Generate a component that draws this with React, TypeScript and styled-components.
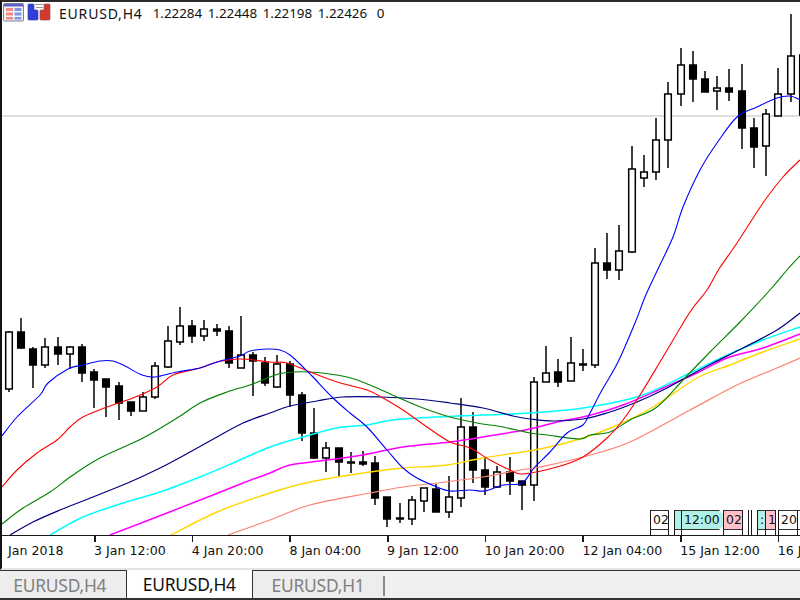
import styled, { createGlobalStyle } from 'styled-components';

const GlobalStyle = createGlobalStyle`
  html, body {
    margin: 0;
    width: 800px;
    height: 600px;
    overflow: hidden;
    background: #fff;
  }
`;

const Page = styled.div`
  display: flex;
  flex-direction: column;
  width: 800px;
  height: 600px;
`;

const ChartWindow = styled.div`
  display: flex;
  flex-direction: column;
  height: 570px;
  box-sizing: border-box;
  border-left: 2px solid #141414;
  border-top: 2px solid #2a2a2a;
  border-bottom: 2px solid #e4e4e4;
  background: #fff;
`;

const Plot = styled.div`
  position: relative;
  height: 533px;
  overflow: hidden;
`;

const PlotSvg = styled.svg`
  display: block;
  width: 798px;
  height: 533px;
  filter: blur(0.3px);
`;

const Legend = styled.div`
  position: absolute;
  top: 1px;
  left: 1px;
  display: flex;
  align-items: center;
  height: 20px;
  font: 13.4px 'Noto Sans', sans-serif;
  color: #111;
  white-space: nowrap;
`;

const LegendIcons = styled.svg`
  flex: 0 0 49px;
  height: 20px;
  margin-right: 7px;
`;

const LegendName = styled.span`
  margin-right: 10px;
  font-size: 14px;
  letter-spacing: 0.8px;
`;

const LegendValue = styled.span`
  flex: 0 0 55px;
`;

const LegendCount = styled.span`
  margin-left: 4px;
`;

const Axis = styled.div`
  position: relative;
  display: flex;
  flex: 1;
  border-top: 1.5px solid #1a1a1a;
  overflow: hidden;
`;

const AxisLabel = styled.div<{ $first?: boolean }>`
  position: relative;
  flex: 0 0 ${(p) => (p.$first ? '92px' : '97.7px')};
  box-sizing: border-box;
  padding: 7px 0 0 ${(p) => (p.$first ? '6px' : '0')};
  font: 12.6px 'DejaVu Sans', sans-serif;
  color: #111;
  white-space: nowrap;

  &::before {
    content: '';
    display: ${(p) => (p.$first ? 'none' : 'block')};
    position: absolute;
    top: 0;
    left: 0;
    width: 1.5px;
    height: 6px;
    background: #1a1a1a;
  }
`;

const MarkerStrip = styled.div`
  position: absolute;
  left: 648px;
  bottom: 0;
  display: flex;
  height: 25px;
`;

const tones = { plain: '#fff', cyan: '#b0f0e6', pink: '#ffc0cb' };

const Marker = styled.div<{ $w: number }>`
  flex: 0 0 ${(p) => p.$w}px;
  box-sizing: border-box;
  height: 25px;
  border-left: 1.5px solid #1a1a1a;
  overflow: hidden;
`;

const MarkerFace = styled.div<{ $tone: keyof typeof tones; $notched?: boolean }>`
  height: 20px;
  box-sizing: border-box;
  padding: 1px 0 0 2px;
  background: ${(p) => tones[p.$tone]};
  border-top: 1.5px solid #333;
  border-bottom: 1.5px solid #333;
  font: 12.4px 'DejaVu Sans', sans-serif;
  color: #111;
  white-space: nowrap;
  clip-path: ${(p) =>
    p.$notched
      ? 'polygon(0 0, calc(100% - 4px) 0, 100% 4px, 100% calc(100% - 4px), calc(100% - 4px) 100%, 0 100%)'
      : 'none'};
`;

const TabBar = styled.div`
  display: flex;
  flex: 1;
  box-sizing: border-box;
  background: #f0f0f0;
  border-bottom: 2px solid #333;
`;

const Tab = styled.div<{ $active?: boolean }>`
  flex: 0 0 126.5px;
  box-sizing: border-box;
  padding: 2px ${(p) => (p.$active ? '0' : '6px')} 0 0;
  text-align: center;
  font: 17.4px 'Noto Sans', sans-serif;
  letter-spacing: -0.2px;
  color: ${(p) => (p.$active ? '#101010' : '#808080')};
  background: ${(p) => (p.$active ? '#fff' : '#ededed')};
  border-top: ${(p) => (p.$active ? '0' : '1.5px solid #333')};
  border-right: 1.5px solid #333;
`;

const LastTab = styled(Tab)`
  flex: 0 0 130px;
  padding: 2px 0 0 0;
  border-right: 0;
`;

const TabRest = styled.div`
  flex: 1;
  border-top: 1.5px solid #333;
  background: #f0f0f0;
`;

const TabDivider = styled.div`
  flex: 0 0 2px;
  width: 2px;
  height: 20px;
  margin-top: 5px;
  background: #8a8a8a;
`;

const TabDividerWrap = styled.div`
  border-top: 1.5px solid #333;
  background: #ededed;
`;

type Candle = [x: number, top: number, bottom: number, wickTop: number, wickBottom: number, bull: boolean];

const candles: Candle[] = [
  [9, 332, 389, 331, 392, true], [21, 332, 348, 318, 349, false], [33, 349, 365, 347, 388, false],
  [45, 347, 365, 338, 368, true], [58, 347, 354, 337, 365, false], [70, 347, 354, 346, 369, true],
  [82, 347, 373, 344, 382, false], [94, 372, 380, 369, 408, false], [106, 379, 387, 379, 417, false],
  [119, 386, 403, 382, 420, false], [131, 402, 411, 402, 416, false], [143, 397, 411, 392, 411, true],
  [155, 366, 397, 362, 399, true], [168, 341, 367, 326, 368, true], [180, 326, 342, 307, 345, true],
  [192, 326, 336, 320, 343, false], [204, 329, 336, 320, 341, true], [217, 329, 331, 324, 336, false],
  [229, 331, 363, 326, 368, false], [241, 355, 368, 316, 368, true], [253, 355, 361, 352, 396, false],
  [265, 363, 383, 357, 386, false], [277, 364, 387, 355, 388, true], [290, 364, 395, 361, 407, false],
  [302, 395, 433, 392, 441, false], [314, 433, 458, 408, 459, false], [326, 448, 458, 442, 472, true],
  [339, 448, 462, 448, 477, false], [351, 462, 463, 452, 473, false], [363, 462, 464, 451, 466, false],
  [375, 463, 498, 456, 505, false], [387, 497, 519, 497, 527, false], [400, 518, 519, 503, 523, false],
  [412, 500, 519, 496, 525, true], [424, 488, 501, 488, 512, true], [436, 489, 512, 484, 512, false],
  [449, 497, 512, 476, 518, true], [461, 427, 498, 398, 507, true], [473, 427, 470, 412, 483, false],
  [485, 470, 487, 457, 495, false], [497, 472, 487, 466, 488, true], [510, 472, 481, 457, 495, false],
  [522, 481, 485, 481, 510, false], [534, 382, 485, 377, 501, true], [546, 373, 382, 346, 382, true],
  [558, 372, 382, 359, 387, false], [571, 363, 381, 337, 381, true], [583, 364, 365, 349, 371, false],
  [595, 263, 365, 248, 368, true], [607, 263, 270, 233, 279, false], [619, 251, 270, 225, 280, true],
  [632, 169, 252, 146, 253, true], [644, 172, 178, 155, 187, true], [656, 140, 172, 118, 180, true],
  [668, 94, 140, 82, 168, true], [681, 65, 94, 48, 106, true], [693, 65, 79, 51, 102, false],
  [705, 79, 92, 71, 92, false], [717, 88, 91, 76, 110, true], [729, 88, 92, 69, 101, false],
  [742, 91, 128, 64, 149, false], [754, 128, 147, 118, 168, false], [766, 114, 146, 109, 176, true],
  [778, 94, 116, 68, 116, true], [791, 56, 94, 14, 102, true], [803, 55, 115, 40, 120, true],
];

const averages: { color: string; width: number; points: string }[] = [
  {
    color: '#fa8072',
    width: 1.2,
    points:
      '228,535 270,520 310,505 370,493 403,487 437,483 483,477 520,470 540,467 583,457 630,442 690,410 737,385 777,368 800,358',
  },
  {
    color: '#ffd700',
    width: 1.4,
    points:
      '171,535 217,512 270,493 310,482 370,472 403,468 447,465 483,458 540,449 580,439 613,427 653,407 697,378 730,365 763,352 800,339',
  },
  {
    color: '#ff00ff',
    width: 1.5,
    points:
      '110,535 167,513 213,495 243,483 270,473 290,465 327,460 363,455 403,447 450,442 483,437 530,429 557,422 587,416 623,405 663,388 697,373 727,358 763,348 800,334',
  },
  {
    color: '#00ffff',
    width: 1.5,
    points:
      '50,535 83,517 123,503 160,492 200,477 233,463 270,447 303,437 337,428 367,425 393,420 437,417 483,415 530,413 583,408 640,396 690,373 723,357 763,340 800,327',
  },
  {
    color: '#000080',
    width: 1.2,
    points:
      '10,535 33,522 60,510 93,497 130,482 160,468 190,452 217,437 243,423 270,413 290,406 317,401 343,397 380,397 417,399 450,403 483,408 513,416 530,419 553,421 583,419 607,413 637,402 663,390 687,377 713,363 743,348 777,330 800,313',
  },
  {
    color: '#008000',
    width: 1.1,
    points:
      '2,524 23,508 50,492 73,475 100,458 143,438 177,418 200,403 227,392 250,385 270,377 283,373 310,372 347,377 370,385 397,397 423,408 450,417 477,423 503,427 530,433 547,435 580,439 590,435 610,432 630,420 657,407 683,380 710,352 740,322 770,290 787,270 800,256',
  },
  {
    color: '#ff0000',
    width: 1.1,
    points:
      '2,487 17,470 37,453 57,440 70,427 83,417 107,407 133,398 157,387 173,375 200,368 217,362 240,359 270,362 287,363 310,372 337,382 367,390 383,398 403,410 427,427 450,442 470,448 490,460 510,470 523,474 557,467 583,457 607,438 623,420 640,395 663,357 690,312 707,290 719,269 737,243 763,203 783,177 800,160',
  },
  {
    color: '#0000ff',
    width: 1.1,
    points:
      '2,436 17,417 40,395 48,383 68,369 83,365 100,361 113,361 125,366 142,375 155,377 177,372 200,368 220,361 240,356 250,351 267,349 280,350 290,355 303,367 313,377 333,398 350,413 367,427 387,450 403,468 417,478 437,487 450,491 470,490 485,491 503,485 522,483 534,468 550,452 567,433 583,425 590,413 602,390 618,362 635,323 645,297 658,269 673,237 683,207 700,170 717,143 737,117 757,107 777,98 790,96 800,100',
  },
];

// catmull-rom through the sampled points, the averages are curves and not broken lines
const smoothPath = (points: string) => {
  const pts = points.split(' ').map((p) => p.split(',').map(Number));
  let d = `M${pts[0][0]} ${pts[0][1]}`;
  for (let i = 0; i < pts.length - 1; i++) {
    const a = pts[Math.max(i - 1, 0)];
    const b = pts[i];
    const c = pts[i + 1];
    const e = pts[Math.min(i + 2, pts.length - 1)];
    const c1x = b[0] + (c[0] - a[0]) / 6;
    const c1y = b[1] + (c[1] - a[1]) / 6;
    const c2x = c[0] - (e[0] - b[0]) / 6;
    const c2y = c[1] - (e[1] - b[1]) / 6;
    d += `C${c1x.toFixed(1)} ${c1y.toFixed(1)} ${c2x.toFixed(1)} ${c2y.toFixed(1)} ${c[0]} ${c[1]}`;
  }
  return d;
};

const axisLabels = ['3 Jan 12:00', '4 Jan 20:00', '8 Jan 04:00', '9 Jan 12:00', '10 Jan 20:00', '12 Jan 04:00', '15 Jan 12:00', '16 Jan 20:00'];
const ohlc = ['1.22284', '1.22448', '1.22198', '1.22426'];

const Candles = () => (
  <g stroke="#000" strokeWidth={1.5}>
    {candles.map(([x, top, bottom, wickTop, wickBottom, bull]) => (
      <g key={x}>
        <line x1={x} x2={x} y1={wickTop} y2={wickBottom} />
        <rect x={x - 3.3} y={top} width={6.6} height={bottom - top} fill={bull ? '#fff' : '#000'} />
      </g>
    ))}
  </g>
);

const LegendGlyphs = () => (
  <LegendIcons viewBox="0 0 49 20">
    <rect x="0.5" y="0.5" width="20" height="17.5" rx="1" fill="#f4f4f8" stroke="#7d8196" />
    <rect x="1" y="1" width="19" height="2.5" fill="#5a62c8" />
    <rect x="3" y="5" width="7" height="3" fill="#f08a80" />
    <rect x="3" y="9.5" width="7" height="3" fill="#f08a80" />
    <rect x="3" y="14" width="7" height="2.5" fill="#f08a80" />
    <rect x="11.5" y="5" width="7" height="3" fill="#7f96e4" />
    <rect x="11.5" y="9.5" width="7" height="3" fill="#7f96e4" />
    <rect x="11.5" y="14" width="7" height="2.5" fill="#7f96e4" />
    <path d="M25 2q0-1 1-1h4q1 0 1 1v5h3q1 0 1 1v8q0 1-1 1h-8q-1 0-1-1z" fill="#2f3fd8" stroke="#3a4aa8" strokeWidth="0.7" />
    <path d="M47 2q0-1-1-1h-4q-1 0-1 1v5h-3q-1 0-1 1v8q0 1 1 1h8q1 0 1-1z" fill="#d03a30" stroke="#a84a40" strokeWidth="0.7" />
    <path d="M32 1.5h10M33 4.5h7" stroke="#9a9a9a" strokeWidth="1.2" />
  </LegendIcons>
);

export default function App() {
  return (
    <Page>
      <GlobalStyle />
      <ChartWindow>
        <Plot>
          <PlotSvg viewBox="2 2 798 533">
            <line x1={2} x2={800} y1={116} y2={116} stroke="#c0c0c0" strokeWidth={1.2} />
            <Candles />
            {averages.map((a) => (
              <path key={a.color} d={smoothPath(a.points)} fill="none" stroke={a.color} strokeWidth={a.width} />
            ))}
          </PlotSvg>
          <MarkerStrip>
            <Marker $w={18}>
              <MarkerFace $tone="plain">02</MarkerFace>
            </Marker>
            <Marker $w={6} />
            <Marker $w={7}>
              <MarkerFace $tone="cyan" />
            </Marker>
            <Marker $w={42}>
              <MarkerFace $tone="cyan" $notched>
                12:00
              </MarkerFace>
            </Marker>
            <Marker $w={19}>
              <MarkerFace $tone="pink">02</MarkerFace>
            </Marker>
            <Marker $w={6} />
            <Marker $w={3} />
            <Marker $w={6} />
            <Marker $w={8}>
              <MarkerFace $tone="cyan">:</MarkerFace>
            </Marker>
            <Marker $w={10}>
              <MarkerFace $tone="pink">1</MarkerFace>
            </Marker>
            <Marker $w={3} />
            <Marker $w={19}>
              <MarkerFace $tone="plain">20</MarkerFace>
            </Marker>
            <Marker $w={6}>
              <MarkerFace $tone="plain">0</MarkerFace>
            </Marker>
          </MarkerStrip>
          <Legend>
            <LegendGlyphs />
            <LegendName>EURUSD,H4</LegendName>
            {ohlc.map((v) => (
              <LegendValue key={v}>{v}</LegendValue>
            ))}
            <LegendCount>0</LegendCount>
          </Legend>
        </Plot>
        <Axis>
          <AxisLabel $first>Jan 2018</AxisLabel>
          {axisLabels.map((label) => (
            <AxisLabel key={label}>{label}</AxisLabel>
          ))}
        </Axis>
      </ChartWindow>
      <TabBar>
        <Tab>EURUSD,H4</Tab>
        <Tab $active>EURUSD,H4</Tab>
        <LastTab>EURUSD,H1</LastTab>
        <TabDividerWrap>
          <TabDivider />
        </TabDividerWrap>
        <TabRest />
      </TabBar>
    </Page>
  );
}
